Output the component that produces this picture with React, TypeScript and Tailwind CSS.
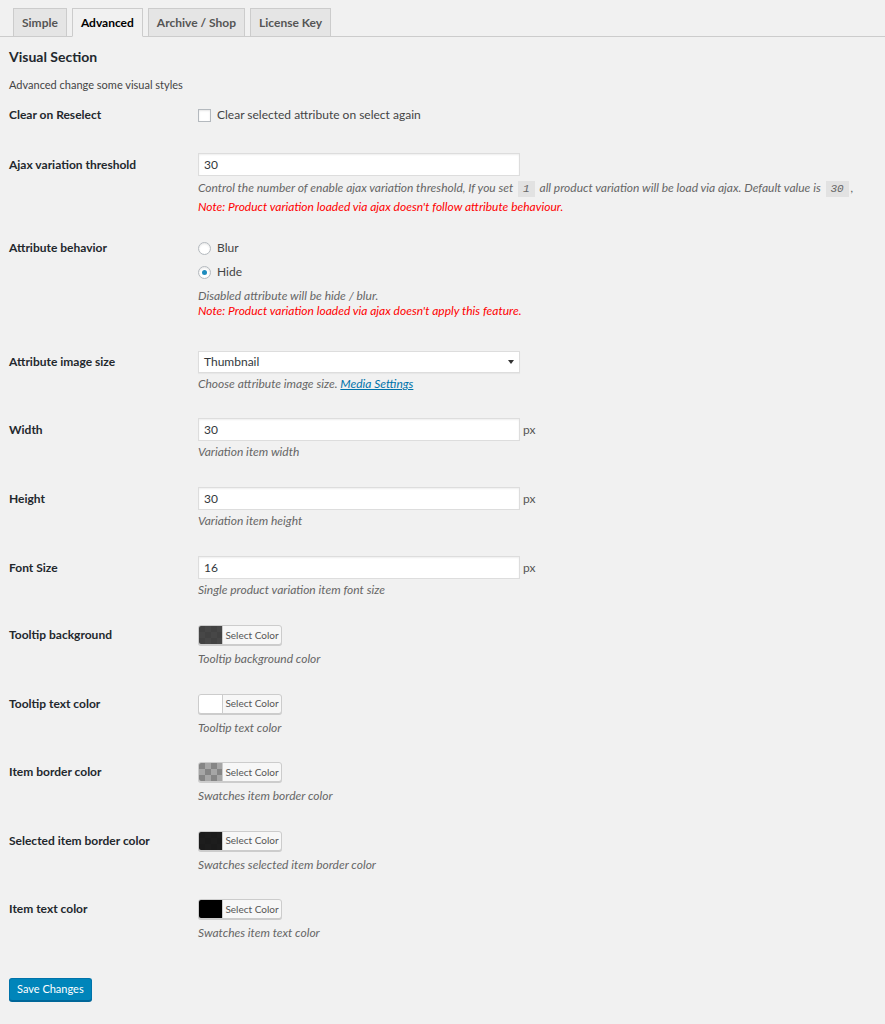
import type { ReactNode } from "react";

const tabs = ["Simple", "Advanced", "Archive / Shop", "License Key"];

interface RowProps {
  label: string;
  labelLh: string;
  pad?: string;
  children: ReactNode;
}

function Row({ label, labelLh, pad = "pt-[14px] pb-[14px]", children }: RowProps) {
  return (
    <div className={`flex ${pad}`}>
      <div className={`w-[189px] shrink-0 text-[12px] font-bold text-[#23282d] ${labelLh}`}>{label}</div>
      <div className="min-w-0 flex-1">{children}</div>
    </div>
  );
}

function Desc({ children, mt = "mt-[3px]" }: { children: ReactNode; mt?: string }) {
  return <p className={`${mt} text-[12px] italic leading-[15px] text-[#666]`}>{children}</p>;
}

function TextField({ value, unit }: { value: string; unit?: boolean }) {
  return (
    <div className="flex items-center">
      <div className="flex h-[23px] w-[322px] items-center border border-[#ddd] bg-white px-[5px] text-[12px] text-[#32373c] shadow-[inset_0_1px_2px_rgba(0,0,0,0.07)]">
        {value}
      </div>
      {unit && <span className="ml-[3px] text-[12px] text-[#555]">px</span>}
    </div>
  );
}

// small swatch drawn over a checkerboard, like the alpha colour picker
function ColorPicker({ color, opacity, id }: { color: string; opacity: number; id: string }) {
  return (
    <div className="flex h-[20px] w-[84px] overflow-hidden rounded-[3px] border border-[#ccc] bg-[#f7f7f7] shadow-[0_1px_0_#ccc]">
      <svg width="23" height="18" className="shrink-0">
        <defs>
          <pattern id={id} width="12" height="12" patternUnits="userSpaceOnUse">
            <rect width="12" height="12" fill="#ffffff" />
            <rect width="6" height="6" fill="#cccccc" />
            <rect x="6" y="6" width="6" height="6" fill="#cccccc" />
          </pattern>
        </defs>
        <rect width="23" height="18" fill={`url(#${id})`} />
        <rect width="23" height="18" fill={color} fillOpacity={opacity} />
      </svg>
      <div className="flex flex-1 items-center justify-center border-l border-[#ccc] text-[10px] text-[#555]">
        Select Color
      </div>
    </div>
  );
}

function Radio({ checked, label }: { checked?: boolean; label: string }) {
  return (
    <div className="flex h-[16px] items-center gap-[6px] text-[12px] text-[#444]">
      <span className="flex h-[13px] w-[13px] items-center justify-center rounded-full border border-[#b4b9be] bg-white shadow-[inset_0_1px_2px_rgba(0,0,0,0.1)]">
        {checked && <span className="h-[5px] w-[5px] rounded-full bg-[#1e8cbe]" />}
      </span>
      {label}
    </div>
  );
}

const pickers = [
  { label: "Tooltip background", color: "#333333", opacity: 0.9, desc: "Tooltip background color" },
  { label: "Tooltip text color", color: "#ffffff", opacity: 1, desc: "Tooltip text color" },
  { label: "Item border color", color: "#000000", opacity: 0.35, desc: "Swatches item border color" },
  { label: "Selected item border color", color: "#111111", opacity: 0.95, desc: "Swatches selected item border color" },
  { label: "Item text color", color: "#000000", opacity: 1, desc: "Swatches item text color" },
];

export default function App() {
  return (
    <div className="min-h-screen bg-[#f1f1f1] text-[#23282d] [font-family:Lato,'Open_Sans',sans-serif]">
      {/* Tabs */}
      <div className="flex gap-[5px] border-b border-[#ccc] pl-[13px] pt-[8px]">
        {tabs.map((t) => (
          <div
            key={t}
            className={
              t === "Advanced"
                ? "-mb-px h-[29px] border border-[#ccc] border-b-[#f1f1f1] bg-[#f1f1f1] px-[8px] text-[12px] font-bold leading-[27px] text-black"
                : "h-[28px] border border-b-0 border-[#ccc] bg-[#e5e5e5] px-[8px] text-[12px] font-bold leading-[27px] text-[#555]"
            }
          >
            {t}
          </div>
        ))}
      </div>

      <div className="pl-[9px]">
        <h2 className="mt-[10px] text-[14px] font-bold leading-[20px] text-[#23282d]">Visual Section</h2>
        <p className="mt-[10px] text-[11px] leading-[16px] text-[#444]">Advanced change some visual styles</p>

        <Row label="Clear on Reselect" labelLh="leading-[16px]" pad="pt-[14px] pb-[16px]">
          <div className="flex h-[16px] items-center gap-[6px] text-[12px] text-[#444]">
            <span className="h-[13px] w-[13px] border border-[#b4b9be] bg-white shadow-[inset_0_1px_2px_rgba(0,0,0,0.1)]" />
            Clear selected attribute on select again
          </div>
        </Row>

        <Row label="Ajax variation threshold" labelLh="leading-[23px]" pad="pt-[14px] pb-[12px]">
          <TextField value="30" />
          <p className="mt-[2px] text-[12px] italic leading-[19px] text-[#666]">
            Control the number of enable ajax variation threshold, If you set{" "}
            <code className="mx-[2px] bg-[rgba(0,0,0,0.06)] px-[5px] py-[2px] text-[11px]">1</code> all product
            variation will be load via ajax. Default value is{" "}
            <code className="mx-[2px] bg-[rgba(0,0,0,0.06)] px-[5px] py-[2px] text-[11px]">30</code>,
          </p>
          <p className="text-[12px] italic leading-[15px] text-[#f00]">
            Note: Product variation loaded via ajax doesn't follow attribute behaviour.
          </p>
        </Row>

        <Row label="Attribute behavior" labelLh="leading-[16px]" pad="pt-[14px] pb-[19px]">
          <Radio label="Blur" />
          <div className="mt-[8px]">
            <Radio label="Hide" checked />
          </div>
          <Desc mt="mt-[8px]">Disabled attribute will be hide / blur.</Desc>
          <p className="text-[12px] italic leading-[15px] text-[#f00]">
            Note: Product variation loaded via ajax doesn't apply this feature.
          </p>
        </Row>

        <Row label="Attribute image size" labelLh="leading-[22px]" pad="pt-[14px] pb-[13px]">
          <div className="flex h-[22px] w-[322px] items-center justify-between border border-[#ddd] bg-white pl-[5px] pr-[5px] text-[12px] text-[#32373c] shadow-[0_1px_1px_rgba(0,0,0,0.04)]">
            Thumbnail
            <svg width="6" height="4" viewBox="0 0 6 4">
              <path d="M0 0h6L3 4z" fill="#333" />
            </svg>
          </div>
          <Desc>
            Choose attribute image size.{" "}
            <a className="text-[#0073aa] underline">Media Settings</a>
          </Desc>
        </Row>

        <Row label="Width" labelLh="leading-[23px]">
          <TextField value="30" unit />
          <Desc>Variation item width</Desc>
        </Row>
        <Row label="Height" labelLh="leading-[23px]">
          <TextField value="30" unit />
          <Desc>Variation item height</Desc>
        </Row>
        <Row label="Font Size" labelLh="leading-[23px]">
          <TextField value="16" unit />
          <Desc>Single product variation item font size</Desc>
        </Row>

        {pickers.map((p, i) => (
          <Row key={p.label} label={p.label} labelLh="leading-[20px]" pad="pt-[14px] pb-[13.5px]">
            <ColorPicker color={p.color} opacity={p.opacity} id={`chk${i}`} />
            <Desc mt="mt-[6px]">{p.desc}</Desc>
          </Row>
        ))}

        <button className="mt-[24px] h-[23px] rounded-[3px] border border-[#0073aa] border-b-[#006799] bg-[#0085ba] px-[7px] text-[11px] text-white shadow-[0_1px_0_#006799]">
          Save Changes
        </button>
      </div>
    </div>
  );
}
